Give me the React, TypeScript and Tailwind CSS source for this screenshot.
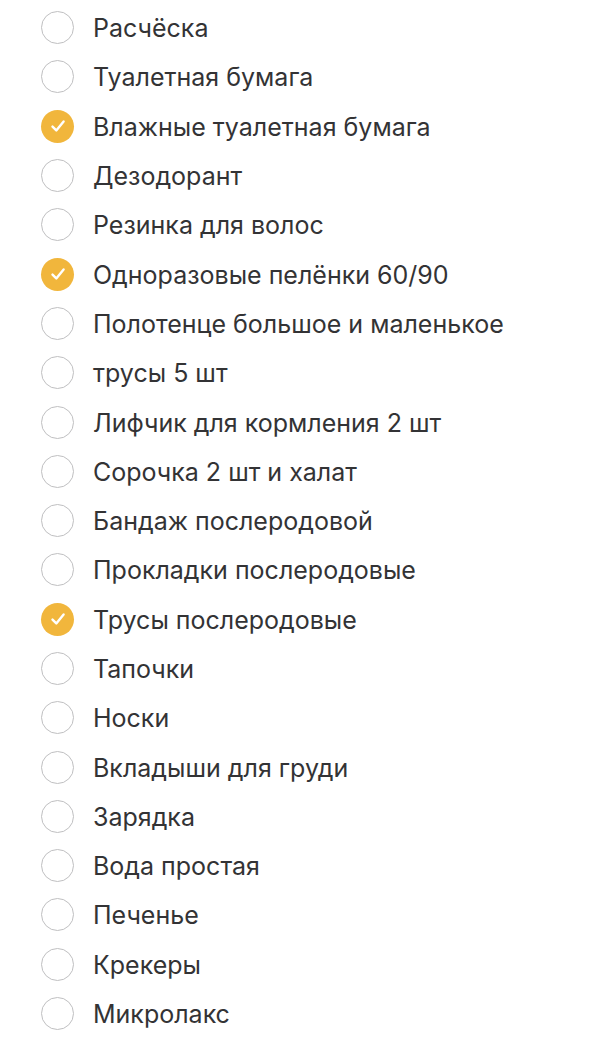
import React from "react";

const items: [string, boolean][] = [
  ["Расчёска", false],
  ["Туалетная бумага", false],
  ["Влажные туалетная бумага", true],
  ["Дезодорант", false],
  ["Резинка для волос", false],
  ["Одноразовые пелёнки 60/90", true],
  ["Полотенце большое и маленькое", false],
  ["трусы 5 шт", false],
  ["Лифчик для кормления 2 шт", false],
  ["Сорочка 2 шт и халат", false],
  ["Бандаж послеродовой", false],
  ["Прокладки послеродовые", false],
  ["Трусы послеродовые", true],
  ["Тапочки", false],
  ["Носки", false],
  ["Вкладыши для груди", false],
  ["Зарядка", false],
  ["Вода простая", false],
  ["Печенье", false],
  ["Крекеры", false],
  ["Микролакс", false],
];

function Check({ on }: { on: boolean }) {
  if (on) {
    return (
      <div className="w-[33px] h-[33px] rounded-full bg-[#f1b63c] flex items-center justify-center shrink-0">
        <svg width="18" height="18" viewBox="0 0 18 18" fill="none">
          <path d="M3.5 9.6 L7.3 13.4 L14.6 4.4" stroke="white" strokeWidth="2.4" strokeLinecap="round" strokeLinejoin="round" />
        </svg>
      </div>
    );
  }
  return <div className="w-[33px] h-[33px] rounded-full border-[1.6px] border-[#bfbfc1] shrink-0" />;
}

export default function App() {
  return (
    <div className="w-[600px] h-[1038px] bg-white overflow-hidden pt-[3px]" style={{ fontFamily: "Inter, 'Noto Sans', sans-serif" }}>
      {items.map(([t, on], i) => (
        <div key={i} className="h-[49.3px] flex items-center pl-[41px]">
          <Check on={on} />
          <span className="ml-[19px] text-[25px] text-[#333335] leading-none pt-[2px]">{t}</span>
        </div>
      ))}
    </div>
  );
}
